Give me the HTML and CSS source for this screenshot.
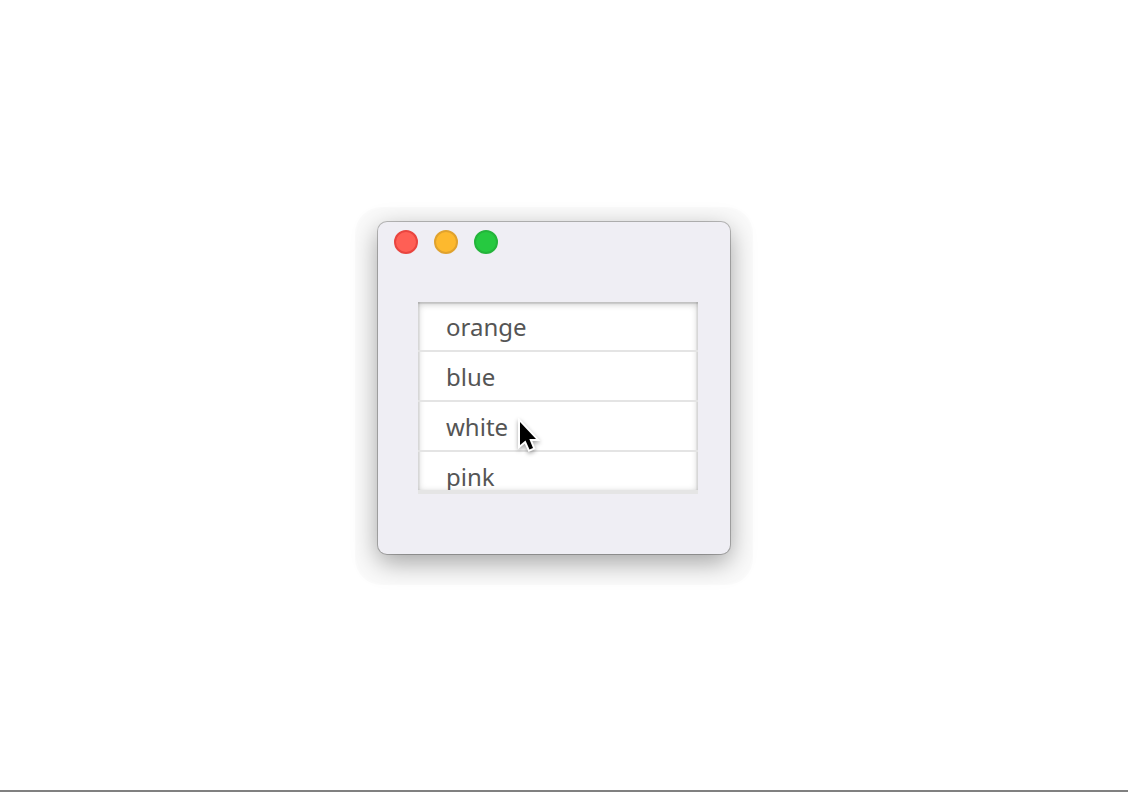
FILE: index.html
```
<!DOCTYPE html>
<html lang="en">
<head>
<meta charset="utf-8">
<meta name="viewport" content="width=device-width, initial-scale=1">
<title>Colors</title>
<link rel="stylesheet" href="styles.css">
</head>
<body>
<main class="desktop">
  <section class="window" aria-label="Colors">
    <header class="titlebar">
      <button class="light light-close" type="button" aria-label="Close"></button>
      <button class="light light-minimize" type="button" aria-label="Minimize"></button>
      <button class="light light-zoom" type="button" aria-label="Zoom"></button>
    </header>
    <div class="content">
      <ul class="list">
        <li class="row">orange</li>
        <li class="row">blue</li>
        <li class="row">white</li>
        <li class="row">pink</li>
      </ul>
    </div>
    <svg class="cursor" width="28" height="40" viewBox="0 0 28 40" aria-hidden="true">
      <path d="M4 4V27L9.500 22.500L13.500 31.500L17 30L13.300 21H20Z" fill="#000" stroke="#fff" stroke-width="4" stroke-linejoin="miter" paint-order="stroke"/>
    </svg>
  </section>
</main>
</body>
</html>
```
FILE: styles.css
```
* {
  box-sizing: border-box;
}

body {
  margin: 0;
  background: #fff;
  color: #555;
  font-family: "Noto Sans", sans-serif;
  font-size: 24px;
}

.desktop {
  display: flex;
  align-items: center;
  justify-content: center;
  min-height: 100vh;
  padding: 0 20px 14px 0;
  border-bottom: 2px solid #808080;
}

.window {
  position: relative;
  border-radius: 9px;
  background: #efeef4;
  box-shadow:
    0 0 0 1px rgba(0, 0, 0, 0.24),
    0 8px 26px rgba(0, 0, 0, 0.36),
    0 8px 1px 23px rgba(0, 0, 0, 0.02);
}

.titlebar {
  display: flex;
  gap: 16px;
  padding: 8px 16px;
}

.light {
  width: 24px;
  height: 24px;
  padding: 0;
  border: 2px solid;
  border-radius: 50%;
}

.light-close {
  border-color: #e9453f;
  background: #ff5f55;
}

.light-minimize {
  border-color: #e0a22e;
  background: #fdb92e;
}

.light-zoom {
  border-color: #24b43b;
  background: #26c940;
}

.content {
  padding: 40px 32px 60px 40px;
}

.list {
  width: 280px;
  height: 192px;
  margin: 0;
  padding: 0;
  overflow: hidden;
  border-bottom: 4px solid #e5e5e5;
  background: #fff;
  box-shadow:
    inset 0 2px 1px rgba(0, 0, 0, 0.1),
    inset 2px 0 1px rgba(0, 0, 0, 0.06),
    inset -2px 0 1px rgba(0, 0, 0, 0.06),
    inset 0 2px 7px rgba(0, 0, 0, 0.22);
  list-style: none;
}

.row {
  height: 50px;
  padding: 0 28px;
  border-bottom: 2px solid #e4e4e4;
  line-height: 50px;
}

.cursor {
  position: absolute;
  top: 196px;
  left: 138px;
  filter: drop-shadow(0 2px 2px rgba(0, 0, 0, 0.35));
}
```
